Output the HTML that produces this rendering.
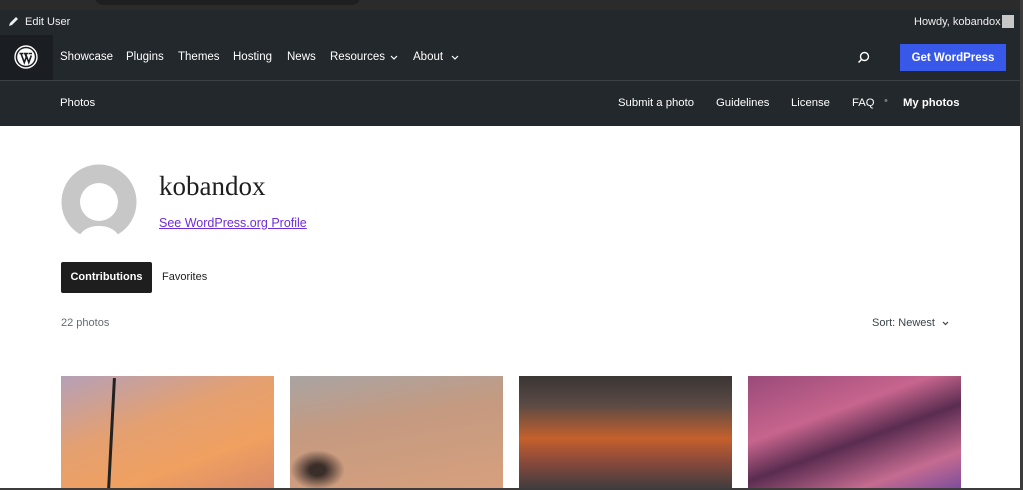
<!DOCTYPE html>
<html><head><meta charset="utf-8"><style>
*{margin:0;padding:0;box-sizing:border-box}
body{width:1023px;height:490px;overflow:hidden;background:#fff;font-family:"Liberation Sans",sans-serif;position:relative}
.chrome{position:absolute;left:0;top:0;width:1023px;height:10px;background:#2b2b2b}
.chrome .bar{position:absolute;left:95px;top:-10px;height:15px;background:#1f1f1f;border-radius:0 0 8px 8px;width:265px}
.adminbar{position:absolute;top:10px;left:0;width:1023px;height:25px;background:#23282d;color:#f0f0f1;font-size:11px}
.nav{position:absolute;top:35px;left:0;width:1023px;height:46px;background:#23282d;border-bottom:1px solid #3c4147;color:#fff;font-size:11.5px}
.logo{position:absolute;left:0;top:0;width:53px;height:45px;background:#1a1d21}
.sub{position:absolute;top:81px;left:0;width:1023px;height:45px;background:#23282d;color:#fff;font-size:11.3px}
.t{position:absolute;white-space:nowrap}
.photo{position:absolute;top:376px;width:213px;height:114px}
</style></head><body>
<div class="chrome"><div class="bar"></div></div>
<div class="adminbar">
<svg class="t" style="left:7px;top:6px" width="12" height="12" viewBox="0 0 12 12"><path d="M2 10l1-3 6-6 2 2-6 6z" fill="#f0f0f1"/></svg>
<span class="t" style="left:25px;top:6px">Edit User</span>
<span class="t" style="left:914px;top:6px">Howdy, kobandox</span>
<div class="t" style="left:1002px;top:5px;width:12px;height:13px;background:#c7c7c7"></div>
</div>
<div class="nav">
<div class="logo"><svg style="position:absolute;left:14px;top:10px" width="24" height="24" viewBox="0 0 24 24"><circle cx="12" cy="12" r="11" fill="none" stroke="#fff" stroke-width="1.4"/><circle cx="12" cy="12" r="8.8" fill="#fff"/><path d="M5.5 8.5h4M10 8.5h4M14.5 8.5h3.5M7 8.5l3.3 9 2-5.5-1.3-3.5M11.5 8.5l3.3 9 2.5-7" stroke="#1a1d21" stroke-width="1.6" fill="none"/></svg></div>
<span class="t" style="left:60px;top:16px">Showcase</span>
<span class="t" style="left:126px;top:16px">Plugins</span>
<span class="t" style="left:178px;top:16px">Themes</span>
<span class="t" style="left:233px;top:16px">Hosting</span>
<span class="t" style="left:287px;top:16px">News</span>
<span class="t" style="left:330px;top:16px">Resources</span>
<svg class="t" style="left:390px;top:20px" width="8" height="5" viewBox="0 0 8 5"><path d="M1 1l3 3 3-3" stroke="#fff" fill="none" stroke-width="1.2"/></svg>
<span class="t" style="left:413px;top:16px">About</span>
<svg class="t" style="left:451px;top:20px" width="8" height="5" viewBox="0 0 8 5"><path d="M1 1l3 3 3-3" stroke="#fff" fill="none" stroke-width="1.2"/></svg>
<svg class="t" style="left:857px;top:16px" width="13" height="13" viewBox="0 0 13 13"><circle cx="7.5" cy="5.5" r="4" fill="none" stroke="#fff" stroke-width="1.4"/><path d="M4.7 8.3L1.5 11.5" stroke="#fff" stroke-width="1.5"/></svg>
<div class="t" style="left:900px;top:9px;width:106px;height:27px;background:#3858e9;color:#fff;font-weight:bold;text-align:center;line-height:28px;font-size:11.5px">Get WordPress</div>
</div>
<div class="sub">
<span class="t" style="left:60px;top:16px">Photos</span>
<span class="t" style="left:618px;top:16px">Submit a photo</span>
<span class="t" style="left:716px;top:16px">Guidelines</span>
<span class="t" style="left:791px;top:16px">License</span>
<span class="t" style="left:852px;top:16px">FAQ</span>
<span class="t" style="left:884px;top:14px;color:#777">•</span>
<span class="t" style="left:903px;top:16px;font-weight:bold">My photos</span>
</div>
<svg class="t" style="left:61px;top:164px" width="76" height="76" viewBox="0 0 76 76"><circle cx="38" cy="38" r="37.5" fill="#c7c7c7"/><circle cx="38" cy="38" r="19" fill="#fff"/><path d="M16 76c4-10 12-14 22-14s18 4 22 14z" fill="#fff"/></svg>
<span class="t" style="left:159px;top:171px;font-family:'Liberation Serif',serif;font-size:27px;color:#1e1e1e">kobandox</span>
<span class="t" style="left:159px;top:216px;font-size:12.5px;color:#6e2dd6;text-decoration:underline">See WordPress.org Profile</span>
<div class="t" style="left:61px;top:262px;width:91px;height:31px;background:#1e1e1e;border-radius:2px;color:#fff;font-weight:bold;font-size:11px;text-align:center;line-height:31px">Contributions</div>
<span class="t" style="left:162px;top:271px;font-size:11px;color:#1e1e1e">Favorites</span>
<span class="t" style="left:61px;top:317px;font-size:11px;color:#656a71">22 photos</span>
<span class="t" style="left:872px;top:317px;font-size:11px;color:#3c434a">Sort: Newest</span>
<svg class="t" style="left:942px;top:321px" width="7" height="5" viewBox="0 0 7 5"><path d="M1 1l2.5 2.5L6 1" stroke="#3c434a" fill="none" stroke-width="1.2"/></svg>
<div class="photo" style="left:61px;background:linear-gradient(160deg,#b5a0b8,#e4a071 40%,#f0a060 70%,#d88a6a)"></div>
<div style="position:absolute;left:110px;top:378px;width:3px;height:112px;background:#222;transform:rotate(3deg)"></div>
<div class="photo" style="left:290px;background:linear-gradient(170deg,#a9a4a3,#c59a80 40%,#d7a07e)"></div>
<div style="position:absolute;left:290px;top:450px;width:55px;height:40px;background:radial-gradient(#3a2e2a 20%,transparent 70%)"></div>
<div class="photo" style="left:519px;background:linear-gradient(180deg,#3a3534,#5a4a45 25%,#c4602c 55%,#8a4a3a 75%,#3c3c40)"></div>
<div class="photo" style="left:748px;background:linear-gradient(160deg,#9a4a7a,#c7658d 35%,#5a2c50 55%,#c56b90 80%,#7a4c9c)"></div>
<div style="position:absolute;left:1020px;top:0;width:3px;height:490px;background:#3c3c3c"></div>
<div style="position:absolute;left:0;top:488px;width:1023px;height:2px;background:#3c3c3c"></div>
</body></html>
